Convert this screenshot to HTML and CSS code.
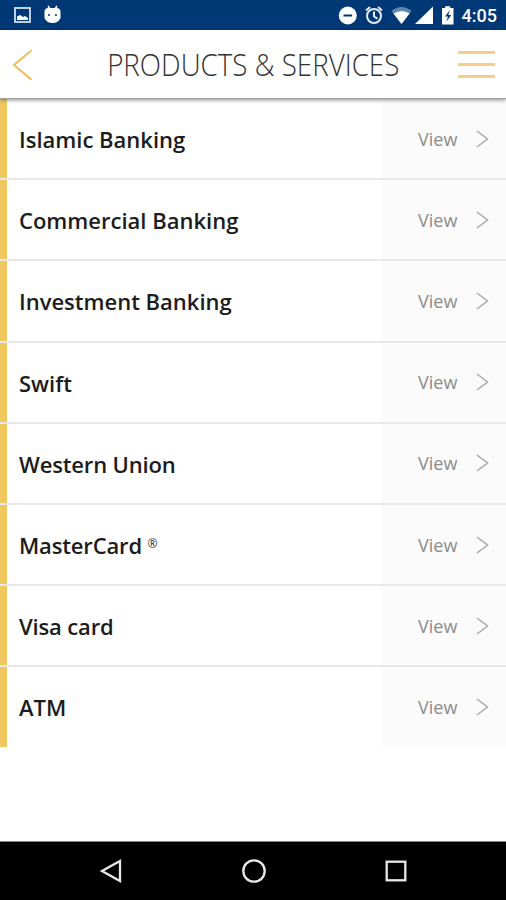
FILE: index.html
```
<!DOCTYPE html>
<html lang="en">
<head>
  <meta charset="UTF-8" />
  <meta name="viewport" content="width=device-width, initial-scale=1.0"/>
  <title>Products &amp; Services</title>
  <link rel="stylesheet" href="styles.css">
</head>
<body>

  <div class="status-bar">
    <svg width="80" height="30" viewBox="0 0 80 30">
      <rect x="15" y="8" width="15" height="14" fill="none" stroke="#d5dff0" stroke-width="1.8"/>
      <path d="M17 20v-3.500l3-1.500 3 2 2-1 3 2v2z" fill="#fff"/>
      <path d="M48 6l2 3M57 6l-2 3" stroke="#fff" stroke-width="1.5"/>
      <path d="M44.500 12q0-4 4-4h8q4 0 4 4v6q-2 5-8 5t-8-5z" fill="#fff"/>
      <circle cx="49" cy="15" r="1" fill="#003876"/>
      <circle cx="56" cy="15" r="1" fill="#003876"/>
    </svg>
    <div class="status-right">
      <svg width="122" height="30" viewBox="336 0 122 30">
        <circle cx="347.8" cy="15.5" r="9" fill="#fff"/>
        <path d="M343.5 15.5h8.6" stroke="#003876" stroke-width="2"/>
        <g fill="none" stroke="#e6ecf5" stroke-width="2">
          <circle cx="374" cy="16" r="7"/>
          <path d="M374 11.5v5l3.5 2.2M366 10.5l4-3.5M382 10.5l-4-3.5"/>
        </g>
        <path d="M391.5 11q10-8 20 0l-10 13z" fill="#5f86b3"/>
        <path d="M393.500 13.500q8-5 16 0L401.500 24z" fill="#fff"/>
        <path d="M433 6.500V24h-18z" fill="#fff"/>
        <path d="M442 8h3.200V6.300h5V8h3.300v16.500H442z" fill="#fff"/>
        <path d="M450 10l-5 6.500h3l-1.700 5.200 5-6.800h-3z" fill="#003876"/>
      </svg>
      <span class="clock">4:05</span>
    </div>
  </div>

  <header class="header">
    <svg class="back" width="21" height="34" viewBox="0 0 21 34">
      <path d="M19.500 2.300L2 17l17.500 14.700" fill="none" stroke="#edbd57" stroke-width="2"/>
    </svg>
    <h1><span>PRODUCTS &amp; SERVICES</span></h1>
    <div class="menu"><i></i><i></i><i></i></div>
  </header>

  <main class="list">
    <div class="row">
      <span class="name">Islamic Banking</span>
      <div class="view">View <svg class="arrow" viewBox="0 0 13 18"><path d="M1 1l10.500 8L1 17"/></svg></div>
    </div>
    <div class="row">
      <span class="name">Commercial Banking</span>
      <div class="view">View <svg class="arrow" viewBox="0 0 13 18"><path d="M1 1l10.500 8L1 17"/></svg></div>
    </div>
    <div class="row">
      <span class="name">Investment Banking</span>
      <div class="view">View <svg class="arrow" viewBox="0 0 13 18"><path d="M1 1l10.500 8L1 17"/></svg></div>
    </div>
    <div class="row">
      <span class="name">Swift</span>
      <div class="view">View <svg class="arrow" viewBox="0 0 13 18"><path d="M1 1l10.500 8L1 17"/></svg></div>
    </div>
    <div class="row">
      <span class="name">Western Union</span>
      <div class="view">View <svg class="arrow" viewBox="0 0 13 18"><path d="M1 1l10.500 8L1 17"/></svg></div>
    </div>
    <div class="row">
      <span class="name">MasterCard <span class="reg">®</span></span>
      <div class="view">View <svg class="arrow" viewBox="0 0 13 18"><path d="M1 1l10.500 8L1 17"/></svg></div>
    </div>
    <div class="row">
      <span class="name">Visa card</span>
      <div class="view">View <svg class="arrow" viewBox="0 0 13 18"><path d="M1 1l10.500 8L1 17"/></svg></div>
    </div>
    <div class="row">
      <span class="name">ATM</span>
      <div class="view">View <svg class="arrow" viewBox="0 0 13 18"><path d="M1 1l10.500 8L1 17"/></svg></div>
    </div>
  </main>

  <nav class="nav-bar">
    <svg width="26" height="26" viewBox="0 0 26 26">
      <path d="M22 3v20L4 13z"/>
    </svg>
    <svg width="26" height="26" viewBox="0 0 26 26">
      <circle cx="13" cy="13" r="10.700"/>
    </svg>
    <svg width="26" height="26" viewBox="0 0 26 26">
      <rect x="3.700" y="3.700" width="18.600" height="18.600"/>
    </svg>
  </nav>

</body>
</html>
```

FILE: styles.css
```
* {
  box-sizing: border-box;
}

body {
  margin: 0;
  height: 900px;
  display: flex;
  flex-direction: column;
  background: #fff;
  font-family: 'Open Sans', 'Noto Sans', sans-serif;
  overflow: hidden;
}

.status-bar {
  height: 30px;
  flex: none;
  display: flex;
  justify-content: space-between;
  background: #003876;
  color: #fff;
}

.status-right {
  display: flex;
  padding-right: 9px;
}

.clock {
  width: 39px;
  font-family: Roboto, sans-serif;
  font-size: 18px;
  font-weight: 500;
  line-height: 32px;
  text-align: right;
  white-space: nowrap;
}

.header {
  position: relative;
  height: 69px;
  flex: none;
  display: flex;
  align-items: center;
  justify-content: space-between;
  padding: 1px 11px 0 12px;
  background: #fff;
  border-bottom: 1px solid #a0a0a0;
  box-shadow: 0 1px 4px rgba(0,0,0,0.45);
}

h1 {
  width: 292px;
  margin: 0 0 2px 16px;
  display: flex;
  justify-content: center;
  color: #333;
  font-size: 31px;
  font-weight: 300;
  line-height: 40px;
  white-space: nowrap;
}

h1 span {
  transform: scaleX(0.895);
}

.menu {
  width: 37px;
  display: flex;
  flex-direction: column;
  gap: 9px;
}

.menu i {
  height: 3px;
  background: #f2d088;
}

.list {
  flex: none;
}

.row {
  height: 81.200px;
  display: flex;
  justify-content: space-between;
  background: linear-gradient(#f1c75f, #f1c75f) no-repeat;
  background-size: 7px 100%;
  padding-left: 7px;
  border-bottom: 2px solid #e9e9e9;
}

.row:last-child {
  height: 79.500px;
  border-bottom: none;
}

.name {
  padding-left: 12px;
  color: #1c1c1c;
  font-size: 22px;
  font-weight: 600;
  line-height: 81px;
}

.row:nth-child(5) .name,
.row:nth-child(6) .name,
.row:nth-child(7) .name {
  letter-spacing: -0.15px;
}

.reg {
  color: #444;
  font-size: 12px;
  vertical-align: 6px;
  line-height: 1;
}

.view {
  width: 124px;
  display: flex;
  align-items: center;
  justify-content: space-between;
  padding: 0 17px 0 36px;
  background: rgba(0,0,0,0.016);
  color: #8c8c8c;
  font-size: 18px;
}

.arrow {
  width: 13px;
  height: 18px;
  fill: none;
  stroke: #a8a8a8;
  stroke-width: 1.500;
}

.nav-bar {
  height: 59px;
  flex: none;
  margin-top: auto;
  display: flex;
  justify-content: space-between;
  align-items: center;
  padding: 0 97px 0 98px;
  background: #000;
  border-top: 1px solid #888;
}

.nav-bar svg {
  fill: none;
  stroke: #e8e8e8;
  stroke-width: 2.300;
}
```
